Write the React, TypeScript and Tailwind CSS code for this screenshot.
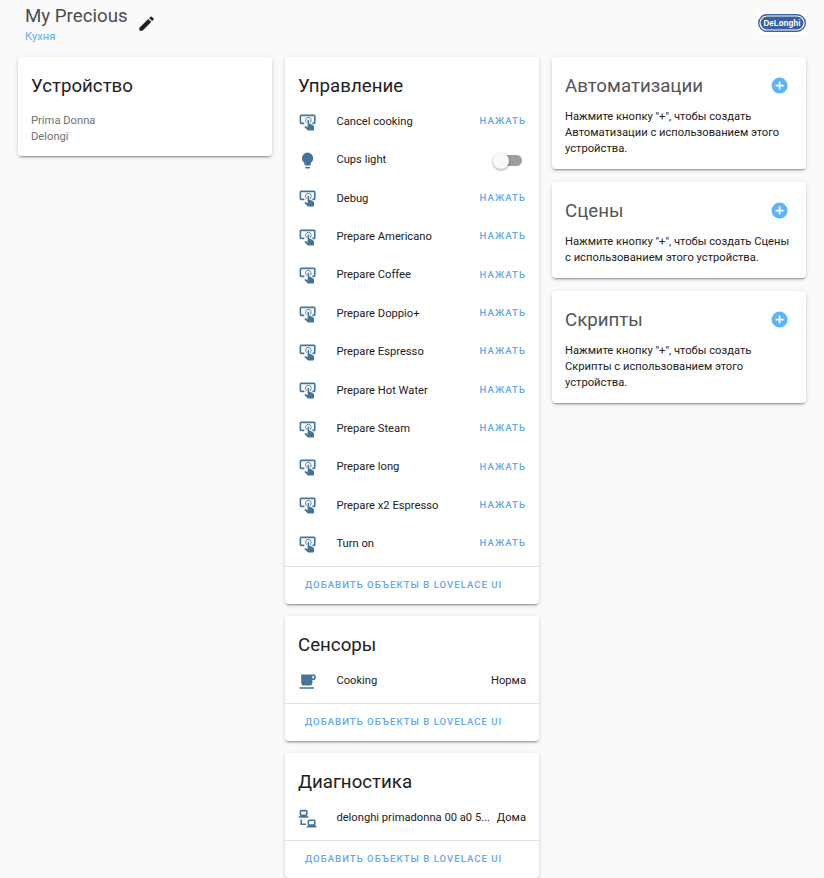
// Device page: three columns of cards
const TAP = "M13 5C15.21 5 17 6.79 17 9C17 10.5 16.2 11.77 15 12.46V11.24C15.61 10.69 16 9.89 16 9C16 7.34 14.66 6 13 6S10 7.34 10 9C10 9.89 10.39 10.69 11 11.24V12.46C9.8 11.77 9 10.5 9 9C9 6.79 10.79 5 13 5M20 20.5C19.97 21.32 19.32 21.97 18.5 22H13C12.62 22 12.26 21.85 12 21.57L8 17.37L8.74 16.6C8.93 16.39 9.2 16.28 9.5 16.28H9.7L12 18V9C12 8.45 12.45 8 13 8S14 8.45 14 9V13.47L15.21 13.6L19.15 15.79C19.68 16.03 20 16.56 20 17.14V20.5M20 2H4C2.9 2 2 2.9 2 4V12C2 13.11 2.9 14 4 14H8V12L4 12L4 4H20L20 12H18V14H20V13.96L20.04 14C21.13 14 22 13.09 22 12V4C22 2.9 21.11 2 20 2Z";
const BULB = "M12,2A7,7 0 0,0 5,9C5,11.38 6.19,13.47 8,14.74V17A1,1 0 0,0 9,18H15A1,1 0 0,0 16,17V14.74C17.81,13.47 19,11.38 19,9A7,7 0 0,0 12,2M9,21A1,1 0 0,0 10,22H14A1,1 0 0,0 15,21V20H9V21Z";
const COFFEE = "M2,21H20V19H2M20,8H18V5H20M20,3H4V13A4,4 0 0,0 8,17H14A4,4 0 0,0 18,13V10H20A2,2 0 0,0 22,8V5C22,3.89 21.1,3 20,3Z";
const LAN = "M4,1C2.89,1 2,1.89 2,3V7C2,8.11 2.89,9 4,9H1V11H13V9H10C11.11,9 12,8.11 12,7V3C12,1.89 11.11,1 10,1H4M4,3H10V7H4V3M3,13V18L3,20H10V18H5V13H3M14,13C12.89,13 12,13.89 12,15V19C12,20.11 12.89,21 14,21H11V23H23V21H20C21.11,21 22,20.11 22,19V15C22,13.89 21.11,13 20,13H14M14,15H20V19H14V15Z";
const PENCIL = "M20.71,7.04C21.1,6.65 21.1,6 20.71,5.63L18.37,3.29C18,2.9 17.35,2.9 16.96,3.29L15.12,5.12L18.87,8.87M3,17.25V21H6.75L17.81,9.93L14.06,6.18L3,17.25Z";
const PLUS = "M17,13H13V17H11V13H7V11H11V7H13V11H17M12,2A10,10 0 0,0 2,12A10,10 0 0,0 12,22A10,10 0 0,0 22,12A10,10 0 0,0 12,2Z";

const controls = [
  "Cancel cooking", "Cups light", "Debug", "Prepare Americano", "Prepare Coffee", "Prepare Doppio+",
  "Prepare Espresso", "Prepare Hot Water", "Prepare Steam", "Prepare long", "Prepare x2 Espresso", "Turn on",
];

function Icon({ d, className }: { d: string; className: string }) {
  return (
    <svg viewBox="0 0 24 24" className={className} fill="currentColor">
      <path d={d} />
    </svg>
  );
}

function Card({ children }: { children: React.ReactNode }) {
  return (
    <div className="bg-white rounded-[4px] shadow-[0_2px_2px_0_rgba(0,0,0,0.14),0_1px_5px_0_rgba(0,0,0,0.12),0_3px_1px_-2px_rgba(0,0,0,0.2)]">
      {children}
    </div>
  );
}

function CardTitle({ children }: { children: React.ReactNode }) {
  return <h2 className="text-[18.7px] leading-[25.6px] text-[#212121] px-[13px] pt-[17px] pb-[3.4px]">{children}</h2>;
}

function Row({ d, name, children }: { d: string; name: string; children: React.ReactNode }) {
  return (
    <div className="h-[38.4px] flex items-center pl-[13px] pr-[13px]">
      <Icon d={d} className="w-[19.2px] h-[19.2px] text-[#44739e] shrink-0" />
      <span className="ml-[19.2px] text-[11.2px] text-[#212121] whitespace-nowrap flex-1">{name}</span>
      {children}
    </div>
  );
}

function AddLink() {
  return (
    <div className="mt-[2.6px] border-t border-[#e0e0e0] h-[38px] pb-[2px] flex items-center pl-[20px] text-[9.6px] font-medium tracking-[1px] text-[#64a8f0]">
      ДОБАВИТЬ ОБЪЕКТЫ В LOVELACE UI
    </div>
  );
}

function HintCard({ title, lines }: { title: string; lines: string[] }) {
  return (
    <Card>
      <div className="flex items-center justify-between pl-[13px] pr-[17px] pt-[17px]">
        <h2 className="text-[18.7px] leading-[25.6px] text-[#555555]">{title}</h2>
        <Icon d={PLUS} className="w-[19.2px] h-[19.2px] mb-[2px] text-[#5fb4f5]" />
      </div>
      <div className="px-[13px] pt-[9px] pb-[12.4px] text-[11.2px] leading-4 text-[#212121]">
        {lines.map((l) => (
          <div key={l} className="whitespace-nowrap">{l}</div>
        ))}
      </div>
    </Card>
  );
}

export default function App() {
  return (
    <div className="h-[878px] w-[824px] overflow-hidden bg-[#fafafa] font-['Roboto',sans-serif]">
      {/* шапка */}
      <div className="h-[57px] flex pl-[25px] pr-[18px]">
        <div className="pt-[5px]">
          <div className="text-[18.7px] leading-[23px] text-[#4d4d4d]">My Precious</div>
          <div className="text-[11.2px] leading-[14px] mt-[2px] text-[#64a8f0]">Кухня</div>
        </div>
        <Icon d={PENCIL} className="w-[19.2px] h-[19.2px] ml-[9px] mt-[14px] text-[#212121]" />
        <div className="ml-auto mt-[12px] w-[48px] h-[22px] bg-white flex items-center justify-center">
          <svg viewBox="0 0 48 18" className="w-[48px] h-[18px]">
            <rect x="0.7" y="0.7" width="46.6" height="16.6" rx="8.3" fill="#fff" stroke="#3a5f9e" strokeWidth="1.4" />
            <rect x="2.6" y="2.6" width="42.8" height="12.8" rx="6.4" fill="#3a5f9e" />
            <text x="24" y="12.2" textAnchor="middle" fontSize="8.5" fontWeight="700" textLength="37" lengthAdjust="spacingAndGlyphs" fill="#fff" fontFamily="'Liberation Sans',sans-serif">DeLonghi</text>
          </svg>
        </div>
      </div>

      <div className="grid grid-cols-[254px_254px_254px] gap-x-[13px] px-[18px] items-start">
        <div>
          <Card>
            <CardTitle>Устройство</CardTitle>
            <div className="px-[13px] pt-[10px] pb-[10.6px] text-[11.2px] leading-4 text-[#727272]">
              <div>Prima Donna</div>
              <div>Delongi</div>
            </div>
          </Card>
        </div>

        <div className="flex flex-col gap-[12px]">
          <Card>
            <CardTitle>Управление</CardTitle>
            {controls.map((name) => (
              <Row key={name} d={name === "Cups light" ? BULB : TAP} name={name}>
                {name === "Cups light" ? (
                  <div className="relative w-[28px] h-[11px] mr-[4px] rounded-full bg-[#9e9e9e]">
                    <div className="absolute left-[-1px] top-[-2.5px] w-4 h-4 rounded-full bg-[#fafafa] shadow-[0_1px_3px_rgba(0,0,0,0.4)]" />
                  </div>
                ) : (
                  <span className="mb-[2px] text-[9.6px] font-medium tracking-[1.05px] text-[#64a8f0]">НАЖАТЬ</span>
                )}
              </Row>
            ))}
            <AddLink />
          </Card>
          <Card>
            <CardTitle>Сенсоры</CardTitle>
            <Row d={COFFEE} name="Cooking">
              <span className="text-[11.2px] text-[#212121]">Норма</span>
            </Row>
            <AddLink />
          </Card>
          <Card>
            <CardTitle>Диагностика</CardTitle>
            <Row d={LAN} name="delonghi primadonna 00 a0 5...">
              <span className="text-[11.2px] text-[#212121]">Дома</span>
            </Row>
            <AddLink />
          </Card>
        </div>

        <div className="flex flex-col gap-[13px]">
          <HintCard
            title="Автоматизации"
            lines={['Нажмите кнопку "+", чтобы создать', "Автоматизации с использованием этого", "устройства."]}
          />
          <HintCard title="Сцены" lines={['Нажмите кнопку "+", чтобы создать Сцены', "с использованием этого устройства."]} />
          <HintCard
            title="Скрипты"
            lines={['Нажмите кнопку "+", чтобы создать', "Скрипты с использованием этого", "устройства."]}
          />
        </div>
      </div>
    </div>
  );
}
